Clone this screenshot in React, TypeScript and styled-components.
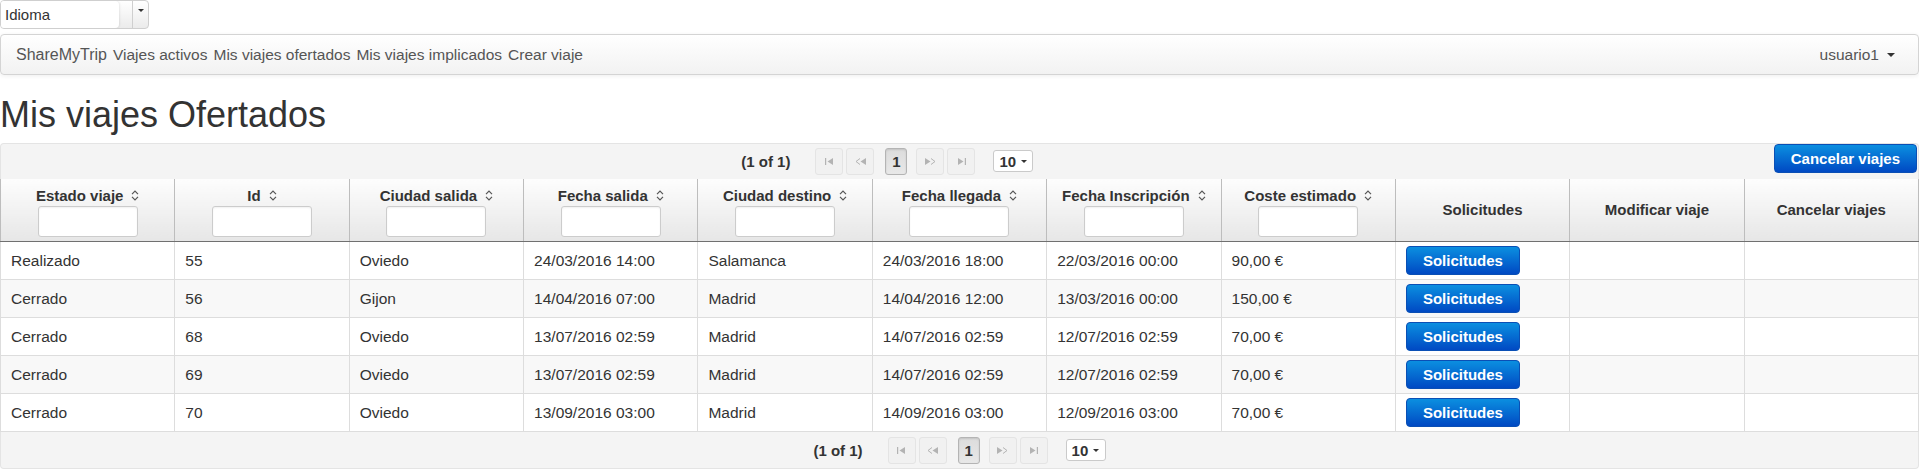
import React from "react";
import styled, { createGlobalStyle } from "styled-components";

const GlobalStyle = createGlobalStyle`
  * {
    box-sizing: border-box;
  }
  body {
    margin: 0;
    background: #ffffff;
    font-family: "Liberation Sans", Arial, Helvetica, sans-serif;
    font-size: 15px;
    color: #333333;
  }
`;

const LangSelect = styled.div`
  display: flex;
  width: 149px;
  height: 29px;
  border: 1px solid #cfcfcf;
  border-radius: 4px;
  background: linear-gradient(#ffffff, #ebebeb);
  overflow: hidden;
`;

const LangLabel = styled.div`
  width: 118px;
  background: #ffffff;
  border-radius: 0 4px 4px 0;
  box-shadow: 1px 0 2px rgba(0, 0, 0, 0.08);
  padding-left: 4px;
  line-height: 27px;
  color: #333333;
`;

const LangTrigger = styled.div`
  margin-left: auto;
  width: 16px;
  border-left: 1px solid #cfcfcf;
  display: flex;
  justify-content: center;
  padding-top: 8px;
`;

const Caret = styled.span<{ $size?: number }>`
  display: inline-block;
  width: 0;
  height: 0;
  border-top: ${({ $size }) => $size ?? 4}px solid #333333;
  border-left: ${({ $size }) => $size ?? 4}px solid transparent;
  border-right: ${({ $size }) => $size ?? 4}px solid transparent;
`;

const NavBar = styled.nav`
  margin-top: 5px;
  height: 41px;
  display: flex;
  align-items: center;
  justify-content: space-between;
  padding: 0 23px 0 15px;
  background: linear-gradient(#ffffff, #f2f2f2);
  border: 1px solid #d4d4d4;
  border-radius: 4px;
  box-shadow: 0 1px 4px rgba(0, 0, 0, 0.065);
`;

const NavLinks = styled.div`
  display: flex;
  align-items: center;
  gap: 6px;
`;

const NavLink = styled.a<{ $brand?: boolean }>`
  color: #555555;
  text-decoration: none;
  font-size: ${({ $brand }) => ($brand ? "16px" : "15.5px")};
  cursor: pointer;
`;

const UserMenu = styled.div`
  display: flex;
  align-items: center;
  gap: 8px;
  color: #555555;
  font-size: 15.5px;
`;

const Title = styled.h1`
  margin: 20px 0 8px;
  font-size: 36px;
  font-weight: 500;
  line-height: 1.1;
  color: #333333;
`;

const PagerBar = styled.div<{ $bottom?: boolean }>`
  display: flex;
  height: ${({ $bottom }) => ($bottom ? "37px" : "36px")};
  background: #f4f4f4;
  border: 1px solid #e4e4e4;
  border-top: ${({ $bottom }) => ($bottom ? "none" : "1px solid #e4e4e4")};
  border-bottom: ${({ $bottom }) => ($bottom ? "1px solid #e4e4e4" : "none")};
  border-radius: ${({ $bottom }) => ($bottom ? "0 0 4px 4px" : "4px 4px 0 0")};
`;

const PagerCenter = styled.div`
  flex: 1;
  display: flex;
  align-items: center;
  justify-content: center;
`;

const PageText = styled.span`
  font-weight: bold;
  color: #333333;
  margin-right: 25px;
`;

const NavButton = styled.span<{ $gap?: number }>`
  width: 28px;
  height: 27px;
  margin-right: ${({ $gap }) => $gap ?? 3}px;
  display: inline-flex;
  align-items: center;
  justify-content: center;
  background: #f1f1f1;
  border: 1px solid #e4e4e4;
  border-radius: 3px;
`;

const PageNumber = styled.span`
  width: 22px;
  height: 27px;
  margin-right: 9px;
  display: inline-flex;
  align-items: center;
  justify-content: center;
  background: linear-gradient(#dcdcdc, #e8e8e8);
  border: 1px solid #b4b4b4;
  border-radius: 3px;
  box-shadow: inset 0 1px 2px rgba(0, 0, 0, 0.12);
  font-weight: bold;
  color: #333333;
`;

const RowsSelect = styled.span`
  width: 40px;
  height: 22px;
  margin-left: 18px;
  display: inline-flex;
  align-items: center;
  gap: 5px;
  padding-left: 5px;
  background: #ffffff;
  border: 1px solid #cacaca;
  border-radius: 3px;
  font-weight: bold;
  color: #333333;
`;

const BlueButton = styled.button`
  height: 29px;
  padding: 0 16px;
  border: 1px solid #0a4fb5;
  border-radius: 4px;
  background: linear-gradient(#0b8fe0, #0049c3);
  color: #ffffff;
  font-family: "Liberation Sans", Arial, sans-serif;
  font-size: 15px;
  font-weight: bold;
  cursor: pointer;
`;

const HeaderButton = styled(BlueButton)`
  margin: 0 1px 0 0;
  align-self: flex-start;
`;

const Grid = styled.table`
  width: 100%;
  border-collapse: collapse;
  table-layout: fixed;
`;

const HeadCell = styled.th<{ $filter?: boolean }>`
  height: 63px;
  padding: ${({ $filter }) => ($filter ? "7px 4px 4px" : "0 4px")};
  vertical-align: ${({ $filter }) => ($filter ? "top" : "middle")};
  background: linear-gradient(#fdfdfd, #e6e6e6);
  border-left: 1px solid #bdbdbd;
  border-right: 1px solid #bdbdbd;
  border-bottom: 1px solid #707070;
  font-size: 15px;
  font-weight: bold;
  color: #333333;
  text-align: center;
`;

const HeadLabel = styled.div`
  display: flex;
  align-items: center;
  justify-content: center;
  gap: 8px;
  height: 20px;
  white-space: nowrap;
`;

const FilterInput = styled.input`
  display: block;
  margin: 0 auto;
  width: 100px;
  height: 31px;
  border: 1px solid #cccccc;
  border-radius: 3px;
  background: #ffffff;
  box-shadow: inset 0 1px 2px rgba(0, 0, 0, 0.06);
`;

const BodyRow = styled.tr`
  background: #ffffff;
  &:nth-child(even) {
    background: #f8f8f8;
  }
`;

const Cell = styled.td`
  height: 38px;
  padding: 0 10px;
  border: 1px solid #dddddd;
  font-size: 15.5px;
  color: #333333;
  white-space: nowrap;
  overflow: hidden;
`;

const SortIcon = () => (
  <svg width="8" height="11" viewBox="0 0 8 11">
    <path
      d="M1 4.2 L4 1.2 L7 4.2 M1 6.8 L4 9.8 L7 6.8"
      fill="none"
      stroke="#555"
      strokeWidth="1.2"
    />
  </svg>
);

type NavKind = "first" | "prev" | "next" | "last";

const NavIcon = ({ kind }: { kind: NavKind }) => {
  const c = "#b3b3b3";
  if (kind === "first")
    return (
      <svg width="9" height="7" viewBox="0 0 9 7">
        <rect x="0" y="0" width="1.2" height="7" fill={c} />
        <path d="M8 0 L2.5 3.5 L8 7 Z" fill={c} />
      </svg>
    );
  if (kind === "last")
    return (
      <svg width="9" height="7" viewBox="0 0 9 7">
        <path d="M1 0 L6.5 3.5 L1 7 Z" fill={c} />
        <rect x="7.8" y="0" width="1.2" height="7" fill={c} />
      </svg>
    );
  if (kind === "prev")
    return (
      <svg width="11" height="7" viewBox="0 0 11 7">
        <path d="M5 0.5 L1 3.5 L5 6.5" fill="none" stroke={c} strokeWidth="1" />
        <path d="M11 0 L5.5 3.5 L11 7 Z" fill={c} />
      </svg>
    );
  return (
    <svg width="11" height="7" viewBox="0 0 11 7">
      <path d="M0 0 L5.5 3.5 L0 7 Z" fill={c} />
      <path d="M6 0.5 L10 3.5 L6 6.5" fill="none" stroke={c} strokeWidth="1" />
    </svg>
  );
};

const Paginator = () => (
  <PagerCenter>
    <PageText>(1 of 1)</PageText>
    <NavButton>
      <NavIcon kind="first" />
    </NavButton>
    <NavButton $gap={11}>
      <NavIcon kind="prev" />
    </NavButton>
    <PageNumber>1</PageNumber>
    <NavButton>
      <NavIcon kind="next" />
    </NavButton>
    <NavButton $gap={0}>
      <NavIcon kind="last" />
    </NavButton>
    <RowsSelect>
      10
      <Caret $size={3} />
    </RowsSelect>
  </PagerCenter>
);

const columns = [
  { title: "Estado viaje", filter: true },
  { title: "Id", filter: true },
  { title: "Ciudad salida", filter: true },
  { title: "Fecha salida", filter: true },
  { title: "Ciudad destino", filter: true },
  { title: "Fecha llegada", filter: true },
  { title: "Fecha Inscripción", filter: true },
  { title: "Coste estimado", filter: true },
  { title: "Solicitudes", filter: false },
  { title: "Modificar viaje", filter: false },
  { title: "Cancelar viajes", filter: false },
];

const trips = [
  ["Realizado", "55", "Oviedo", "24/03/2016 14:00", "Salamanca", "24/03/2016 18:00", "22/03/2016 00:00", "90,00 €"],
  ["Cerrado", "56", "Gijon", "14/04/2016 07:00", "Madrid", "14/04/2016 12:00", "13/03/2016 00:00", "150,00 €"],
  ["Cerrado", "68", "Oviedo", "13/07/2016 02:59", "Madrid", "14/07/2016 02:59", "12/07/2016 02:59", "70,00 €"],
  ["Cerrado", "69", "Oviedo", "13/07/2016 02:59", "Madrid", "14/07/2016 02:59", "12/07/2016 02:59", "70,00 €"],
  ["Cerrado", "70", "Oviedo", "13/09/2016 03:00", "Madrid", "14/09/2016 03:00", "12/09/2016 03:00", "70,00 €"],
];

const App: React.FC = () => {
  return (
    <>
      <GlobalStyle />
      <LangSelect>
        <LangLabel>Idioma</LangLabel>
        <LangTrigger>
          <Caret $size={3} />
        </LangTrigger>
      </LangSelect>

      <NavBar>
        <NavLinks>
          <NavLink $brand>ShareMyTrip</NavLink>
          <NavLink>Viajes activos</NavLink>
          <NavLink>Mis viajes ofertados</NavLink>
          <NavLink>Mis viajes implicados</NavLink>
          <NavLink>Crear viaje</NavLink>
        </NavLinks>
        <UserMenu>
          usuario1
          <Caret />
        </UserMenu>
      </NavBar>

      <Title>Mis viajes Ofertados</Title>

      <div>
        <PagerBar>
          <Paginator />
          <HeaderButton>Cancelar viajes</HeaderButton>
        </PagerBar>
        <Grid>
          <thead>
            <tr>
              {columns.map((col) => (
                <HeadCell key={col.title} $filter={col.filter}>
                  <HeadLabel>
                    {col.title}
                    {col.filter && <SortIcon />}
                  </HeadLabel>
                  {col.filter && <FilterInput type="text" />}
                </HeadCell>
              ))}
            </tr>
          </thead>
          <tbody>
            {trips.map((trip) => (
              <BodyRow key={trip[1]}>
                {trip.map((value, i) => (
                  <Cell key={i}>{value}</Cell>
                ))}
                <Cell>
                  <BlueButton>Solicitudes</BlueButton>
                </Cell>
                <Cell />
                <Cell />
              </BodyRow>
            ))}
          </tbody>
        </Grid>
        <PagerBar $bottom>
          <Paginator />
        </PagerBar>
      </div>
    </>
  );
};

export default App;
